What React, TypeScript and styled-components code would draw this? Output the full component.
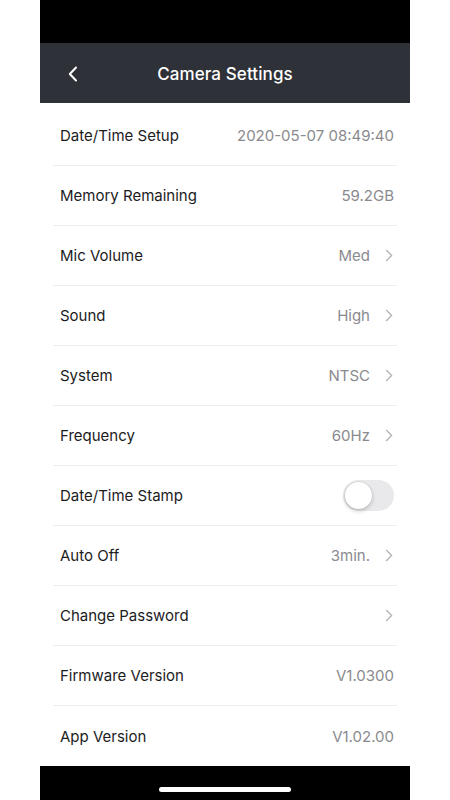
import React, { useState } from "react";
import styled, { createGlobalStyle } from "styled-components";

const GlobalStyle = createGlobalStyle`
  html, body {
    margin: 0;
    padding: 0;
    background: #ffffff;
  }
  body {
    font-family: Inter, "Liberation Sans", Arial, sans-serif;
  }
`;

type Row = {
  label: string;
  value?: string;
  arrow?: boolean;
  toggle?: boolean;
};

const rows: Row[] = [
  { label: "Date/Time Setup", value: "2020-05-07 08:49:40" },
  { label: "Memory Remaining", value: "59.2GB" },
  { label: "Mic Volume", value: "Med", arrow: true },
  { label: "Sound", value: "High", arrow: true },
  { label: "System", value: "NTSC", arrow: true },
  { label: "Frequency", value: "60Hz", arrow: true },
  { label: "Date/Time Stamp", toggle: true },
  { label: "Auto Off", value: "3min.", arrow: true },
  { label: "Change Password", arrow: true },
  { label: "Firmware Version", value: "V1.0300" },
  { label: "App Version", value: "V1.02.00" },
];

const Chevron = () => (
  <svg width="8" height="13" viewBox="0 0 8 13" fill="none">
    <path d="M1.2 1 L6.6 6.5 L1.2 12" stroke="#b4b4b8" strokeWidth="1.3" />
  </svg>
);

const BackIcon = () => (
  <svg width="12" height="16" viewBox="0 0 12 16" fill="none">
    <path
      d="M9 1.5 L2.8 8 L9 14.5"
      stroke="#ffffff"
      strokeWidth="2"
      strokeLinecap="round"
      strokeLinejoin="round"
    />
  </svg>
);

export default function App() {
  const [stamp, setStamp] = useState(false);

  return (
    <>
      <GlobalStyle />
      <Phone>
        <StatusBar />
        <Header>
          <BackButton>
            <BackIcon />
          </BackButton>
          <Title>Camera Settings</Title>
        </Header>
        <List>
          {rows.map((row, i) => (
            <Item key={row.label} last={i === rows.length - 1}>
              <Label>{row.label}</Label>
              <Right>
                {row.value && <Value>{row.value}</Value>}
                {row.arrow && (
                  <Arrow>
                    <Chevron />
                  </Arrow>
                )}
                {row.toggle && (
                  <Switch on={stamp} onClick={() => setStamp(!stamp)}>
                    <Knob on={stamp} />
                  </Switch>
                )}
              </Right>
            </Item>
          ))}
        </List>
        <HomeBar>
          <Indicator />
        </HomeBar>
      </Phone>
    </>
  );
}

const Phone = styled.div`
  width: 370px;
  height: 800px;
  margin: 0 auto;
  display: flex;
  flex-direction: column;
  background: #ffffff;
`;

const StatusBar = styled.div`
  height: 43px;
  background: #000000;
`;

const Header = styled.div`
  height: 60px;
  box-sizing: border-box;
  padding-top: 2px;
  background: #2e3137;
  display: flex;
  align-items: center;
  justify-content: center;
  position: relative;
`;

const BackButton = styled.div`
  position: absolute;
  left: 27px;
  top: 23px;
  display: flex;
`;

const Title = styled.div`
  color: #ffffff;
  font-size: 17px;
  font-weight: 500;
  letter-spacing: 0.1px;
`;

const List = styled.div`
  flex: 1;
  padding: 3px 13px 0;
  display: flex;
  flex-direction: column;
`;

const Item = styled.div<{ last: boolean }>`
  height: 60px;
  box-sizing: border-box;
  display: flex;
  align-items: center;
  justify-content: space-between;
  padding: 0 3px 0 7px;
  border-bottom: ${(p) => (p.last ? "none" : "1px solid #ededed")};
`;

const Label = styled.div`
  font-size: 15px;
  color: #1c1c1e;
`;

const Right = styled.div`
  display: flex;
  align-items: center;
  gap: 15px;
`;

const Value = styled.div`
  font-size: 15px;
  color: #8a8a8e;
`;

const Arrow = styled.div`
  display: flex;
  margin-right: 1px;
`;

const Switch = styled.div<{ on: boolean }>`
  width: 51px;
  height: 31px;
  border-radius: 16px;
  box-sizing: border-box;
  background: ${(p) => (p.on ? "#34c759" : "#e9e9eb")};
  display: flex;
  align-items: center;
  justify-content: ${(p) => (p.on ? "flex-end" : "flex-start")};
  padding: 0 2px;
  cursor: pointer;
`;

const Knob = styled.div<{ on: boolean }>`
  width: 27px;
  height: 27px;
  border-radius: 50%;
  background: #ffffff;
  box-shadow: 0 2px 4px rgba(0, 0, 0, 0.2), 0 0 0 0.5px rgba(0, 0, 0, 0.08);
`;

const HomeBar = styled.div`
  height: 34px;
  background: #000000;
  display: flex;
  align-items: flex-end;
  justify-content: center;
  padding-bottom: 8px;
  box-sizing: border-box;
`;

const Indicator = styled.div`
  width: 132px;
  height: 5px;
  border-radius: 3px;
  background: #ffffff;
`;
